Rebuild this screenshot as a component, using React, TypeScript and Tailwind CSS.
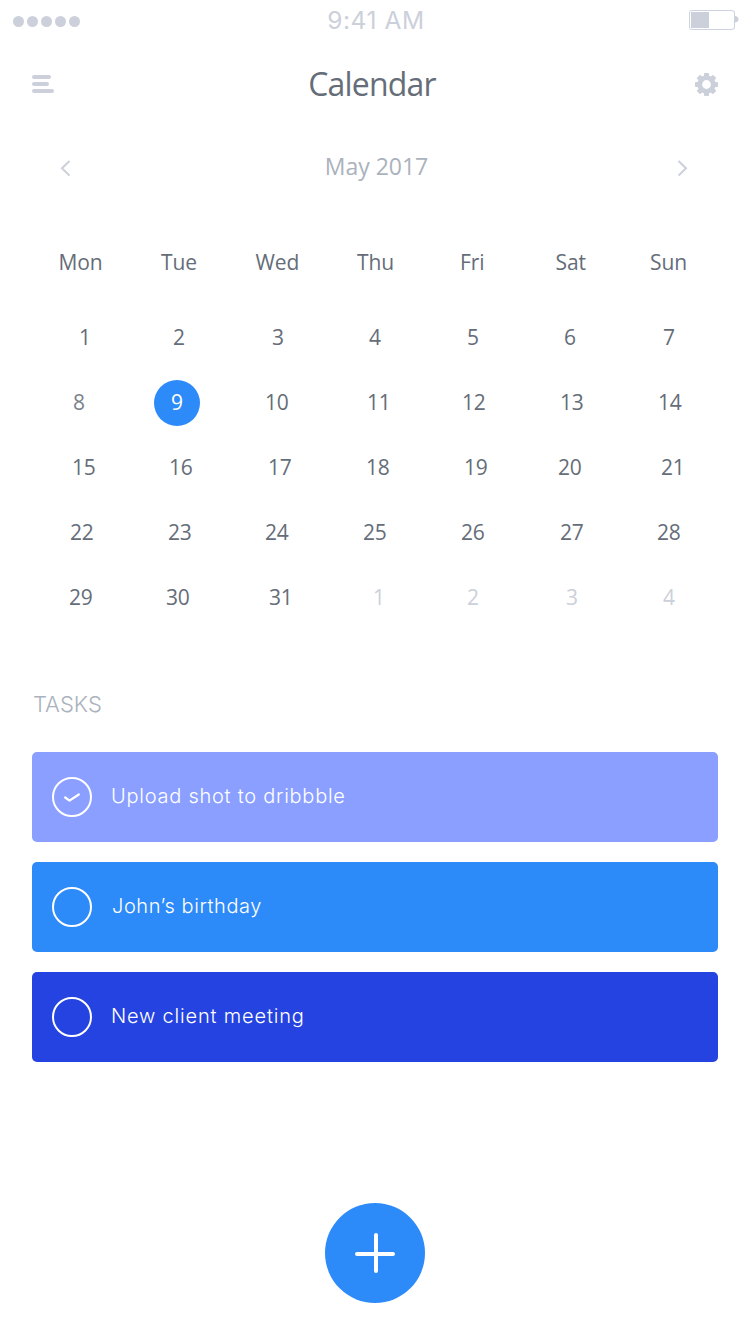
import React from "react";

type Cell = { label: string; pad: string; tone?: "muted" | "active" | "soft" };

const weekdays: Cell[] = [
  { label: "Mon", pad: "pl-[26.5px]" },
  { label: "Tue", pad: "pl-[31px]" },
  { label: "Wed", pad: "pl-[27.5px]" },
  { label: "Thu", pad: "pl-[31px]" },
  { label: "Fri", pad: "pl-[36px]" },
  { label: "Sat", pad: "pl-[33.5px]" },
  { label: "Sun", pad: "pl-[30px]" },
];

const days: Cell[] = [
  { label: "1", pad: "pl-[46px]" },
  { label: "2", pad: "pl-[42px]" },
  { label: "3", pad: "pl-[43px]" },
  { label: "4", pad: "pl-[42px]" },
  { label: "5", pad: "pl-[42px]" },
  { label: "6", pad: "pl-[41px]" },
  { label: "7", pad: "pl-[42px]" },
  { label: "8", pad: "pl-[40px]", tone: "soft" },
  { label: "9", pad: "pl-[23px]", tone: "active" },
  { label: "10", pad: "pl-[36px]" },
  { label: "11", pad: "pl-[40px]" },
  { label: "12", pad: "pl-[37px]" },
  { label: "13", pad: "pl-[37px]" },
  { label: "14", pad: "pl-[37px]" },
  { label: "15", pad: "pl-[39px]" },
  { label: "16", pad: "pl-[38px]" },
  { label: "17", pad: "pl-[39px]" },
  { label: "18", pad: "pl-[39px]" },
  { label: "19", pad: "pl-[39px]" },
  { label: "20", pad: "pl-[35px]" },
  { label: "21", pad: "pl-[40px]" },
  { label: "22", pad: "pl-[37px]" },
  { label: "23", pad: "pl-[37px]" },
  { label: "24", pad: "pl-[36px]" },
  { label: "25", pad: "pl-[36px]" },
  { label: "26", pad: "pl-[36px]" },
  { label: "27", pad: "pl-[37px]" },
  { label: "28", pad: "pl-[36px]" },
  { label: "29", pad: "pl-[36px]" },
  { label: "30", pad: "pl-[35px]" },
  { label: "31", pad: "pl-[40px]" },
  { label: "1", pad: "pl-[46px]", tone: "muted" },
  { label: "2", pad: "pl-[42px]", tone: "muted" },
  { label: "3", pad: "pl-[43px]", tone: "muted" },
  { label: "4", pad: "pl-[42px]", tone: "muted" },
];

const tones = {
  normal: "text-[#656d78]",
  soft: "text-[#7b828c]",
  muted: "text-[#ccd0da]",
};

const tasks = [
  { title: "Upload shot to dribbble", bg: "bg-[#8a9fff]", text: "pl-[19px] tracking-[0.75px]", done: true },
  { title: "John’s birthday", bg: "bg-[#2d8af9]", text: "pl-[20px] tracking-[0.58px]", done: false },
  { title: "New client meeting", bg: "bg-[#2443e0]", text: "pl-[19px] tracking-[0.82px]", done: false },
];

function StatusBar() {
  return (
    <div className="flex h-10 items-start justify-between pl-[13px] pr-[11px]">
      <div className="mt-4 flex w-[150px] gap-[3px]">
        {[0, 1, 2, 3, 4].map((i) => (
          <span key={i} className="size-[11px] rounded-full bg-[#ccd0da]" />
        ))}
      </div>
      <div className="h-10 font-['Inter',sans-serif] text-[24.5px] leading-[41px] tracking-[0.6px] text-[#ccd0da]">
        9:41 AM
      </div>
      <div className="flex w-[150px] justify-end">
        <svg className="mt-[9px]" width="50" height="22" viewBox="0 0 50 22" fill="none">
          <rect x="0.5" y="1.5" width="45" height="19" rx="2.5" stroke="#ccd3de" />
          <rect x="2" y="3" width="18" height="16" fill="#ccd0da" />
          <path d="M46 7c2 0 3.5 1.6 3.5 3.2S48 13.5 46 13.5z" fill="#ccd0da" />
        </svg>
      </div>
    </div>
  );
}

function Gear() {
  return (
    <svg width="24" height="24" viewBox="-11.5 -12.5 24 24" fill="#ccd0da">
      {[0, 45, 90, 135, 180, 225, 270, 315].map((a) => (
        <rect key={a} x="-2.5" y="-11.5" width="5" height="6" rx="0.8" transform={`rotate(${a})`} />
      ))}
      <circle r="6.8" fill="none" stroke="#ccd0da" strokeWidth="4.8" />
    </svg>
  );
}

function Header() {
  return (
    <header className="flex h-[88px] items-center justify-between px-8">
      <button className="flex w-12 flex-col gap-[3px]" aria-label="Menu">
        <span className="h-1 w-[19px] rounded-full bg-[#ccd0da]" />
        <span className="h-1 w-[17px] rounded-full bg-[#ccd0da]" />
        <span className="h-1 w-[22px] rounded-full bg-[#ccd0da]" />
      </button>
      <h1 className="pr-[7px] text-[32px] leading-none tracking-[-0.8px] text-[#656d78]">Calendar</h1>
      <button className="-mr-px flex w-12 justify-end" aria-label="Settings">
        <Gear />
      </button>
    </header>
  );
}

function MonthNav() {
  return (
    <div className="flex h-20 items-center justify-between px-[60px]">
      <svg width="12" height="18" viewBox="0 0 12 18" fill="none" stroke="#ccd0da" strokeWidth="2">
        <path d="M9.5 2 2 9.3 9.5 16.6" />
      </svg>
      <div className="pb-[4px] pl-[5px] text-[23px] leading-none text-[#aab2bd]">May 2017</div>
      <svg className="ml-[2px]" width="12" height="18" viewBox="0 0 12 18" fill="none" stroke="#ccd0da" strokeWidth="2">
        <path d="M0.5 2 8 9.3 0.5 16.6" />
      </svg>
    </div>
  );
}

function Day({ cell }: { cell: Cell }) {
  return (
    <div className={`flex h-[65px] items-center ${cell.pad}`}>
      {cell.tone === "active" ? (
        <span className="flex size-[46px] items-center justify-center rounded-full bg-[#2d8af9] font-medium text-white">
          {cell.label}
        </span>
      ) : (
        <span className={tones[cell.tone ?? "normal"]}>{cell.label}</span>
      )}
    </div>
  );
}

export default function App() {
  return (
    <main className="flex h-[1334px] w-[750px] flex-col bg-white font-['Open_Sans','Noto_Sans',sans-serif]">
      <StatusBar />
      <Header />
      <MonthNav />
      <section className="px-8 pt-[29px] text-[21px] leading-none">
        <div className="grid h-[50px] grid-cols-7 items-center tracking-[-0.1px] text-[#656d78]">
          {weekdays.map((d) => (
            <div key={d.label} className={d.pad}>
              {d.label}
            </div>
          ))}
        </div>
        <div className="-mr-px grid grid-cols-7 pl-px pt-[18px] tracking-[-0.2px]">
          {days.map((d, i) => (
            <Day key={i} cell={d} />
          ))}
        </div>
      </section>
      <section className="px-8 pt-[62px] font-['Inter',sans-serif] font-light">
        <h2 className="h-[60px] pl-[1px] text-[22px] leading-[24px] text-[#aab2bd]">TASKS</h2>
        <div className="flex flex-col gap-5">
          {tasks.map((t) => (
            <div key={t.title} className={`flex h-[90px] items-center rounded-[5px] px-5 ${t.bg}`}>
              <span className="flex size-10 items-center justify-center rounded-full border-2 border-white">
                {t.done && (
                  <svg width="18" height="12" viewBox="0 0 18 12" fill="none" stroke="white" strokeWidth="2.3" strokeLinecap="round" strokeLinejoin="round">
                    <path d="M2.2 6.5 6.5 9.6 15.8 3.5" />
                  </svg>
                )}
              </span>
              <span className={`pb-[2px] text-[20px] leading-none text-white ${t.text}`}>{t.title}</span>
            </div>
          ))}
        </div>
      </section>
      <div className="flex justify-center pt-[141px]">
        <button className="flex size-[100px] items-center justify-center rounded-full bg-[#2d8af9]" aria-label="Add task">
          <svg width="42" height="42" viewBox="0 0 42 42" stroke="white" strokeWidth="4" strokeLinecap="round">
            <path d="M22 3V39M3 22H39" />
          </svg>
        </button>
      </div>
    </main>
  );
}
